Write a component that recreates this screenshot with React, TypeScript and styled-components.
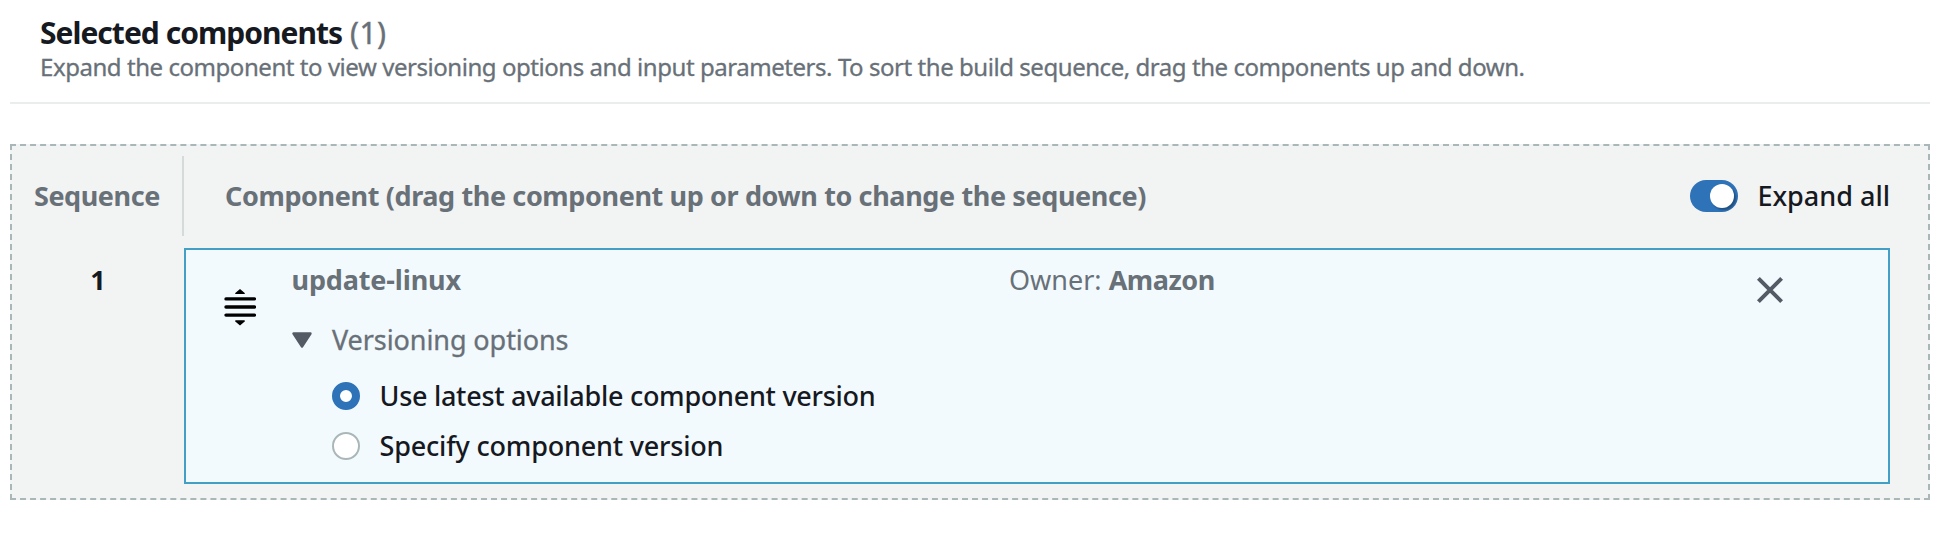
import React, { useState } from "react";
import styled, { createGlobalStyle } from "styled-components";

const color = {
  text: "#16191f",
  muted: "#687078",
  icon: "#545b64",
  line: "#eaeded",
  divider: "#d5dbdb",
  dashed: "#aab7b8",
  panel: "#f2f3f3",
  card: "#f3fafe",
  cardBorder: "#449fc6",
  accent: "#2e72b8",
};

const GlobalStyle = createGlobalStyle`
  *, *::before, *::after { box-sizing: border-box; }
  body {
    margin: 0;
    background: #fff;
    color: ${color.text};
    font-family: "Noto Sans", "Open Sans", sans-serif;
    font-size: 27px;
    line-height: 40px;
  }
`;

const Page = styled.main`
  padding: 0 28px 0 10px;
`;

const Header = styled.header`
  padding: 15px 30px 20px;
  border-bottom: 2px solid ${color.line};
`;

const Title = styled.h2`
  margin: 0 0 1px;
  font-size: 30px;
  line-height: 36px;
  font-weight: 700;
  letter-spacing: -0.98px;
  white-space: pre;
`;

const Counter = styled.span`
  color: ${color.muted};
  font-weight: 400;
  letter-spacing: 0.4px;
  margin-left: 8px;
  -webkit-text-stroke: 0.4px ${color.muted};
`;

const Description = styled.p`
  margin: 0;
  color: ${color.muted};
  font-size: 24px;
  font-weight: 400;
  line-height: 30px;
  letter-spacing: -0.449px;
  white-space: nowrap;
  -webkit-text-stroke: 0.3px ${color.muted};
`;

const Panel = styled.section`
  display: grid;
  grid-template-columns: 172px 1fr;
  margin-top: 40px;
  padding: 10px 38px 14px 0;
  border: 2px dashed ${color.dashed};
  background: ${color.panel};
`;

const SequenceHeading = styled.div`
  height: 80px;
  display: flex;
  align-items: center;
  padding-left: 22px;
  margin-bottom: 12px;
  border-right: 2px solid ${color.divider};
  color: ${color.muted};
  font-weight: 700;
  letter-spacing: -0.44px;
`;

const ComponentHeading = styled.div`
  height: 80px;
  display: flex;
  align-items: center;
  justify-content: space-between;
  padding-left: 41px;
  color: ${color.muted};
  font-weight: 700;
  letter-spacing: -0.376px;
  white-space: nowrap;
`;

const ToggleLabel = styled.label`
  display: flex;
  align-items: center;
  gap: 19px;
  color: ${color.text};
  font-weight: 500;
  letter-spacing: 0;
`;

const Toggle = styled.button<{ $on: boolean }>`
  display: flex;
  align-items: center;
  justify-content: ${(p) => (p.$on ? "flex-end" : "flex-start")};
  width: 48px;
  height: 32px;
  padding: 0 4px;
  border: 0;
  border-radius: 16px;
  background: ${(p) => (p.$on ? color.accent : color.icon)};
`;

const Knob = styled.span`
  width: 24px;
  height: 24px;
  border-radius: 50%;
  background: #fff;
  box-shadow: 2px 2px 2px rgba(0, 0, 0, 0.3);
`;

const SequenceNumber = styled.div`
  padding-top: 12px;
  text-align: center;
  font-weight: 700;
`;

const Card = styled.article`
  display: flex;
  height: 236px;
  padding: 10px 0 16px 38px;
  border: 2px solid ${color.cardBorder};
  background: ${color.card};
`;

const DragIcon = styled.svg`
  flex: none;
  width: 32px;
  height: 38px;
  margin: 29px 36px 0 0;
`;

const Details = styled.div`
  flex: none;
  width: 717px;
`;

const Name = styled.div`
  color: ${color.muted};
  font-weight: 700;
  letter-spacing: -0.14px;
  margin-left: -0.5px;
`;

const Expander = styled.div`
  display: flex;
  align-items: center;
  gap: 20px;
  margin: 20px 0 16px;
  color: ${color.muted};
  letter-spacing: -0.08px;
  -webkit-text-stroke: 0.3px ${color.muted};
`;

const Caret = styled.svg`
  width: 20px;
  height: 16px;
`;

const Options = styled.div`
  display: grid;
  gap: 10px;
  padding-left: 40px;
`;

const Option = styled.label`
  display: flex;
  align-items: center;
  gap: 19.5px;
  font-weight: 500;
  letter-spacing: -0.28px;
  white-space: nowrap;

  & + & {
    letter-spacing: -0.2px;
  }
`;

const Radio = styled.span<{ $checked: boolean }>`
  width: 28px;
  height: 28px;
  border-radius: 50%;
  background: #fff;
  border: ${(p) =>
    p.$checked ? `8px solid ${color.accent}` : `2px solid ${color.dashed}`};
`;

const Owner = styled.div`
  flex: 1;
  color: ${color.muted};
`;

const OwnerName = styled.b`
  font-weight: 700;
  letter-spacing: -0.46px;
`;

const CloseIcon = styled.svg`
  flex: none;
  width: 28px;
  height: 28px;
  margin: 16px 104px 0 0;
`;

const versions = [
  "Use latest available component version",
  "Specify component version",
];

export default function App() {
  const [expanded, setExpanded] = useState(true);
  const [selected, setSelected] = useState(0);

  return (
    <>
      <GlobalStyle />
      <Page>
        <Header>
          <Title>
            Selected components<Counter>(1)</Counter>
          </Title>
          <Description>
            Expand the component to view versioning options and input
            parameters. To sort the build sequence, drag the components up and
            down.
          </Description>
        </Header>
        <Panel>
          <SequenceHeading>Sequence</SequenceHeading>
          <ComponentHeading>
            Component (drag the component up or down to change the sequence)
            <ToggleLabel>
              <Toggle $on={expanded} onClick={() => setExpanded(!expanded)}>
                <Knob />
              </Toggle>
              Expand all
            </ToggleLabel>
          </ComponentHeading>
          <SequenceNumber>1</SequenceNumber>
          <Card>
            <DragIcon viewBox="0 0 32 38">
              <path d="M16 0 L21 4.2 Q21 5 20 5 H12 Q11 5 11 4.2 Z M16 36.4 L21 32.2 Q21 31.2 20 31.2 H12 Q11 31.2 11 32.2 Z" />
              <path
                d="M2 9.9 H30.4 M2 18 H30.4 M2 26.1 H30.4"
                stroke="#000"
                strokeWidth="3.4"
                strokeLinecap="round"
              />
            </DragIcon>
            <Details>
              <Name>update-linux</Name>
              <Expander>
                <Caret viewBox="0 0 20 16">
                  <path
                    d="M1.5 1.5 H18.5 L10 14.5 Z"
                    fill={color.icon}
                    stroke={color.icon}
                    strokeWidth="2.4"
                    strokeLinejoin="round"
                  />
                </Caret>
                Versioning options
              </Expander>
              <Options>
                {versions.map((label, i) => (
                  <Option key={label} onClick={() => setSelected(i)}>
                    <Radio $checked={selected === i} />
                    {label}
                  </Option>
                ))}
              </Options>
            </Details>
            <Owner>
              Owner: <OwnerName>Amazon</OwnerName>
            </Owner>
            <CloseIcon viewBox="0 0 28 28">
              <path
                d="M2.4 2.4 L25.6 25.6 M25.6 2.4 L2.4 25.6"
                stroke={color.icon}
                strokeWidth="4"
              />
            </CloseIcon>
          </Card>
        </Panel>
      </Page>
    </>
  );
}
